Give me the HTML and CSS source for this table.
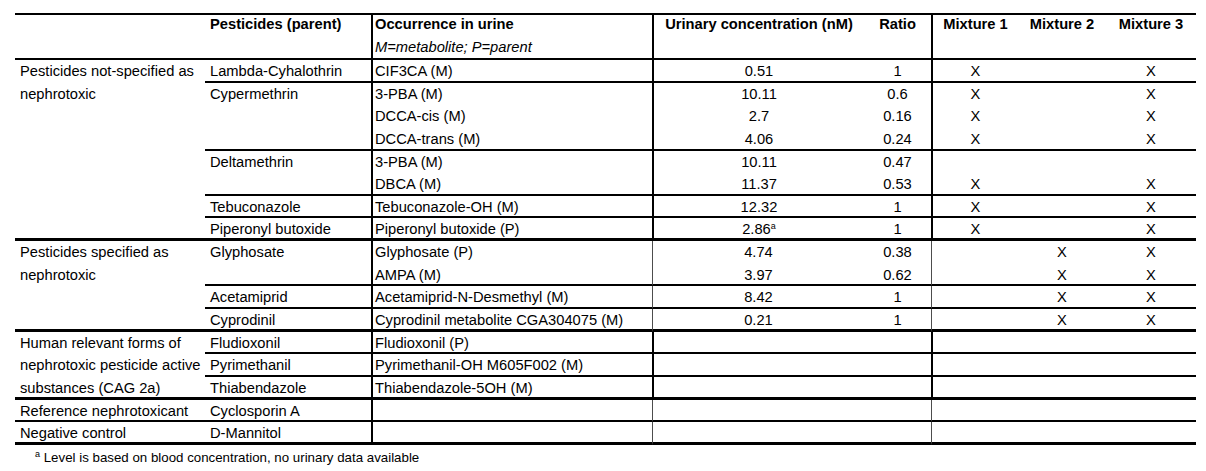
FILE: index.html
```html
<!DOCTYPE html>
<html lang="en">
<head>
<meta charset="utf-8">
<title>Pesticides and mixtures</title>
<link rel="stylesheet" href="styles.css">
</head>
<body>
<div class="sheet">
  <div class="tbl">
    <div class="grp head">
      <div class="c h g"></div>
      <div class="c h p">Pesticides (parent)</div>
      <div class="c h o">Occurrence in urine<div class="sub">M=metabolite; P=parent</div></div>
      <div class="c h u">Urinary concentration (nM)</div>
      <div class="c h r">Ratio</div>
      <div class="c h m m1">Mixture 1</div>
      <div class="c h m">Mixture 2</div>
      <div class="c h m">Mixture 3</div>
    </div>

    <div class="grp">
      <div class="c g bb s8">Pesticides not-specified as<br>nephrotoxic</div>

      <div class="c p b">Lambda-Cyhalothrin</div>
      <div class="c o b">CIF3CA (M)</div>
      <div class="c u b">0.51</div>
      <div class="c r b">1</div>
      <div class="c m m1 b">X</div>
      <div class="c m b"></div>
      <div class="c m b">X</div>

      <div class="c p b s3">Cypermethrin</div>
      <div class="c o">3-PBA (M)</div>
      <div class="c u">10.11</div>
      <div class="c r">0.6</div>
      <div class="c m m1">X</div>
      <div class="c m"></div>
      <div class="c m">X</div>
      <div class="c o">DCCA-cis (M)</div>
      <div class="c u">2.7</div>
      <div class="c r">0.16</div>
      <div class="c m m1">X</div>
      <div class="c m"></div>
      <div class="c m">X</div>
      <div class="c o b">DCCA-trans (M)</div>
      <div class="c u b">4.06</div>
      <div class="c r b">0.24</div>
      <div class="c m m1 b">X</div>
      <div class="c m b"></div>
      <div class="c m b">X</div>

      <div class="c p b s2">Deltamethrin</div>
      <div class="c o">3-PBA (M)</div>
      <div class="c u">10.11</div>
      <div class="c r">0.47</div>
      <div class="c m m1"></div>
      <div class="c m"></div>
      <div class="c m"></div>
      <div class="c o b">DBCA (M)</div>
      <div class="c u b">11.37</div>
      <div class="c r b">0.53</div>
      <div class="c m m1 b">X</div>
      <div class="c m b"></div>
      <div class="c m b">X</div>

      <div class="c p b">Tebuconazole</div>
      <div class="c o b">Tebuconazole-OH (M)</div>
      <div class="c u b">12.32</div>
      <div class="c r b">1</div>
      <div class="c m m1 b">X</div>
      <div class="c m b"></div>
      <div class="c m b">X</div>

      <div class="c p bb">Piperonyl butoxide</div>
      <div class="c o bb">Piperonyl butoxide (P)</div>
      <div class="c u bb">2.86<sup>a</sup></div>
      <div class="c r bb">1</div>
      <div class="c m m1 bb">X</div>
      <div class="c m bb"></div>
      <div class="c m bb">X</div>
    </div>

    <div class="grp thin">
      <div class="c g bb s4">Pesticides specified as<br>nephrotoxic</div>

      <div class="c p b s2">Glyphosate</div>
      <div class="c o">Glyphosate (P)</div>
      <div class="c u">4.74</div>
      <div class="c r">0.38</div>
      <div class="c m m1"></div>
      <div class="c m">X</div>
      <div class="c m">X</div>
      <div class="c o b">AMPA (M)</div>
      <div class="c u b">3.97</div>
      <div class="c r b">0.62</div>
      <div class="c m m1 b"></div>
      <div class="c m b">X</div>
      <div class="c m b">X</div>

      <div class="c p b">Acetamiprid</div>
      <div class="c o b">Acetamiprid-N-Desmethyl (M)</div>
      <div class="c u b">8.42</div>
      <div class="c r b">1</div>
      <div class="c m m1 b"></div>
      <div class="c m b">X</div>
      <div class="c m b">X</div>

      <div class="c p bb">Cyprodinil</div>
      <div class="c o bb">Cyprodinil metabolite CGA304075 (M)</div>
      <div class="c u bb">0.21</div>
      <div class="c r bb">1</div>
      <div class="c m m1 bb"></div>
      <div class="c m bb">X</div>
      <div class="c m bb">X</div>
    </div>

    <div class="grp">
      <div class="c g bb s3">Human relevant forms of<br>nephrotoxic pesticide active<br>substances (CAG 2a)</div>

      <div class="c p b">Fludioxonil</div>
      <div class="c o b">Fludioxonil (P)</div>
      <div class="c u b"></div>
      <div class="c r b"></div>
      <div class="c m m1 b"></div>
      <div class="c m b"></div>
      <div class="c m b"></div>

      <div class="c p b">Pyrimethanil</div>
      <div class="c o b">Pyrimethanil-OH M605F002 (M)</div>
      <div class="c u b"></div>
      <div class="c r b"></div>
      <div class="c m m1 b"></div>
      <div class="c m b"></div>
      <div class="c m b"></div>

      <div class="c p bb">Thiabendazole</div>
      <div class="c o bb">Thiabendazole-5OH (M)</div>
      <div class="c u bb"></div>
      <div class="c r bb"></div>
      <div class="c m m1 bb"></div>
      <div class="c m bb"></div>
      <div class="c m bb"></div>
    </div>

    <div class="grp thin">
      <div class="c g b">Reference nephrotoxicant</div>
      <div class="c p b">Cyclosporin A</div>
      <div class="c o b"></div>
      <div class="c u b"></div>
      <div class="c r b"></div>
      <div class="c m m1 b"></div>
      <div class="c m b"></div>
      <div class="c m b"></div>

      <div class="c g bb">Negative control</div>
      <div class="c p bb">D-Mannitol</div>
      <div class="c o bb"></div>
      <div class="c u bb"></div>
      <div class="c r bb"></div>
      <div class="c m m1 bb"></div>
      <div class="c m bb"></div>
      <div class="c m bb"></div>
    </div>
  </div>
  <p class="foot"><sup>a</sup> Level is based on blood concentration, no urinary data available</p>
</div>
</body>
</html>
```

FILE: styles.css
```css
html, body {
  margin: 0;
  padding: 0;
  background: #fff;
}

body {
  font-family: "Liberation Sans", Arial, sans-serif;
  font-size: 14.7px;
  color: #000;
}

.sheet {
  padding: 13px 0 0 15px;
}

.tbl {
  display: grid;
  width: 1181px;
  grid-template-columns: 190px 166px 281px 212px 67px 87px 88px 90px;
  grid-template-rows: 45px;
  grid-auto-rows: 22.65px;
  border-top: 2px solid #000;
}

.grp {
  display: contents;
}

.c {
  box-sizing: border-box;
  min-width: 0;
  line-height: 22px;
  white-space: nowrap;
}

.g {
  padding-left: 5px;
  line-height: 22.65px;
}

.p {
  padding-left: 5px;
}

.o {
  padding-left: 2px;
  border-left: 2px solid #000;
}

.u,
.r,
.m {
  text-align: center;
}

.u,
.m1 {
  border-left: 2px solid #000;
}

.thin .u,
.thin .m1 {
  border-left: 1px solid #4d4d4d;
}

.h {
  font-weight: 700;
  line-height: 18px;
  border-bottom: 2px solid #000;
}

.sub {
  margin-top: 5px;
  font-weight: 400;
  font-style: italic;
}

.b {
  border-bottom: 2px solid #000;
}

.bb {
  border-bottom: 3px solid #000;
}

.s2 { grid-row: span 2; }
.s3 { grid-row: span 3; }
.s4 { grid-row: span 4; }
.s8 { grid-row: span 8; }

sup {
  font-size: 9px;
  line-height: 0;
  vertical-align: 5px;
}

.foot {
  margin: 5px 0 0 20px;
  font-size: 13.3px;
  line-height: 16px;
}
```
